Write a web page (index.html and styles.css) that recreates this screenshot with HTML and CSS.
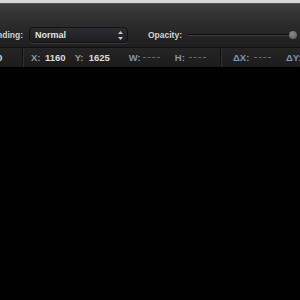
FILE: index.html
```html
<!DOCTYPE html>
<html lang="en">
<head>
    <meta charset="UTF-8">
    <title>Toolbar</title>
    <link rel="stylesheet" href="styles.css">
</head>
<body>

    <!-- Window top edge -->
    <div class="top-edge"></div>

    <!-- Options toolbar -->
    <div class="toolbar">
        <span class="label label-cut">nding:</span>
        <div class="select">
            <span>Normal</span>
            <svg class="arrows" width="7" height="11" viewBox="0 0 7 11">
                <path d="M3.5 1 L6 4 L1 4 Z" fill="#c8c8c8"/>
                <path d="M3.5 10 L6 7 L1 7 Z" fill="#c8c8c8"/>
            </svg>
        </div>
        <span class="label">Opacity:</span>
        <div class="slider">
            <div class="track"></div>
            <div class="knob"></div>
        </div>
    </div>

    <!-- Info bar -->
    <div class="infobar">
        <div class="cell cell-first"><span class="val">0</span></div>
        <div class="cell cell-size">
            <span class="key">X:</span><span class="val">1160</span>
            <span class="key">Y:</span><span class="val val-last">1625</span>
            <span class="key blue">W:</span><span class="dash"></span>
            <span class="key blue">H:</span><span class="dash"></span>
        </div>
        <div class="cell cell-delta">
            <span class="key key-wide blue">&Delta;X:</span><span class="dash"></span>
            <span class="key key-wide blue">&Delta;Y:</span>
        </div>
    </div>

</body>
</html>
```

FILE: styles.css
```css
body {
    margin: 0;
    padding: 0;
    background-color: #000;
    font-family: 'Liberation Sans', Arial, sans-serif;
    width: 300px;
    height: 300px;
    overflow: hidden;
}

.top-edge {
    height: 3px;
    background-color: #d6d6d6;
    border-bottom: 1px solid #555;
}

/* Options toolbar */
.toolbar {
    height: 43px;
    box-sizing: border-box;
    padding-top: 23px;
    background: linear-gradient(#3c3c3c, #2c2c2c 45%, #1e1e1e);
    display: flex;
    align-items: flex-start;
    white-space: nowrap;
    overflow: hidden;
}

.label {
    color: #d4d4d4;
    font-size: 8.5px;
    font-weight: bold;
    line-height: 16px;
}

.label-cut {
    margin-left: -3px;
    margin-right: 6px;
}

.select {
    width: 99px;
    height: 16px;
    flex: none;
    box-sizing: border-box;
    background: linear-gradient(#2b2d30, #1c1d1f);
    border: 1px solid #121212;
    border-radius: 4px;
    box-shadow: 0 1px 0 #3a3a3a;
    display: flex;
    align-items: center;
    justify-content: space-between;
    padding: 0 3px 0 5px;
    color: #e2e2e2;
    font-size: 9px;
    font-weight: bold;
    margin-right: 20px;
}

.slider {
    flex: 1;
    position: relative;
    height: 16px;
    margin-left: 6px;
}

.track {
    position: absolute;
    left: 0;
    right: 6px;
    top: 7px;
    height: 1px;
    background-color: #0a0a0a;
    border-bottom: 1px solid #3c3c3c;
}

.knob {
    position: absolute;
    right: 3px;
    top: 4px;
    width: 8px;
    height: 8px;
    border-radius: 50%;
    background: radial-gradient(circle at 40% 35%, #8a8a8a, #555);
}

/* Info bar */
.infobar {
    height: 19px;
    background: linear-gradient(#252525, #1c1c1c);
    border-top: 1px solid #111;
    display: flex;
    align-items: center;
    white-space: nowrap;
    overflow: hidden;
    font-size: 9.5px;
    font-weight: bold;
}

.cell {
    height: 100%;
    flex: none;
    box-sizing: border-box;
    display: flex;
    align-items: center;
    border-right: 1px solid #111;
    box-shadow: 1px 0 0 #2f2f2f;
}

.cell-first {
    width: 23px;
}

.cell-first .val {
    margin-left: -3px;
}

.cell-size {
    width: 198px;
    padding-left: 8px;
}

.cell-delta {
    padding-left: 12px;
    border-right: none;
    box-shadow: none;
}

.key {
    color: #9a9a9a;
    width: 14px;
    flex: none;
}

.key-wide {
    width: 21px;
}

.key.blue {
    color: #8194b4;
}

.val {
    color: #dcdcdc;
    margin-right: 9px;
}

.val-last {
    margin-right: 19px;
}

.dash {
    width: 17px;
    flex: none;
    border-top: 1px dashed #666;
    margin-right: 15px;
}
```
